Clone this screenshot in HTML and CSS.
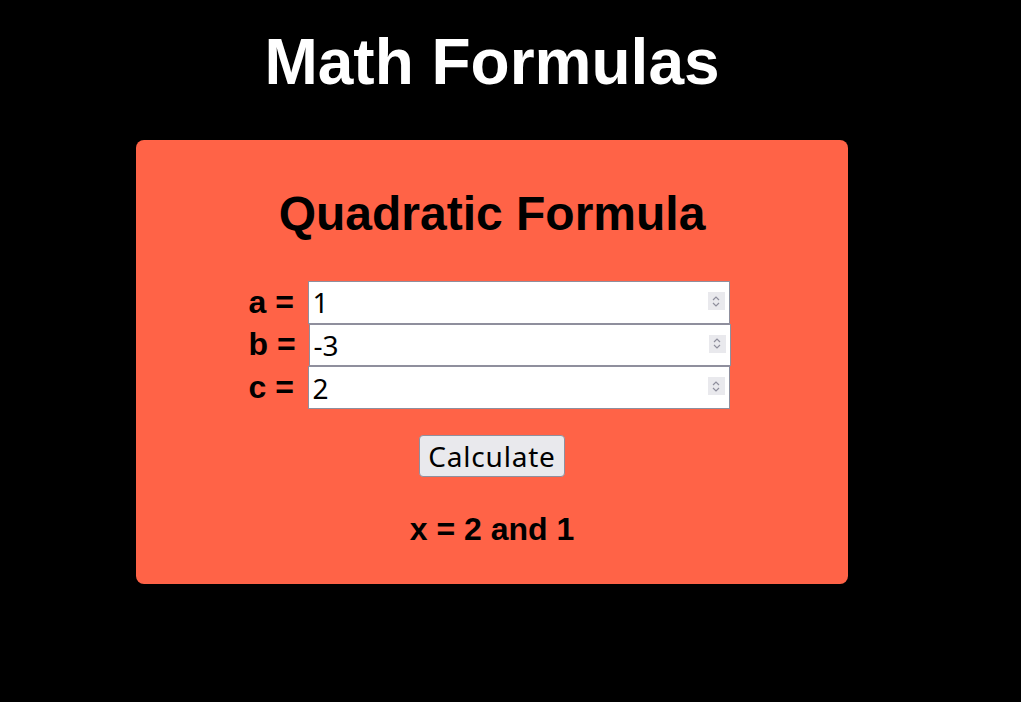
FILE: index.html
```html
<!DOCTYPE html>
<html lang="en">
<head>
<meta charset="utf-8">
<title>Math Formulas</title>
<link rel="stylesheet" href="styles.css">
</head>
<body>
<div class="page">
  <h1 class="title">Math Formulas</h1>
  <section class="card">
    <h2 class="card-title">Quadratic Formula</h2>
    <div class="fields">
      <div class="row">
        <label class="label" for="a">a =</label>
        <span class="field">
          <input class="num" id="a" type="text" value="1">
          <span class="spin"><svg width="8" height="11" viewBox="0 0 8 11"><path d="M1 4 L4 1 L7 4 M1 7 L4 10 L7 7" fill="none" stroke="#8f8f9d" stroke-width="1.2"/></svg></span>
        </span>
      </div>
      <div class="row">
        <label class="label" for="b">b =</label>
        <span class="field field-shift">
          <input class="num" id="b" type="text" value="-3">
          <span class="spin"><svg width="8" height="11" viewBox="0 0 8 11"><path d="M1 4 L4 1 L7 4 M1 7 L4 10 L7 7" fill="none" stroke="#8f8f9d" stroke-width="1.2"/></svg></span>
        </span>
      </div>
      <div class="row">
        <label class="label" for="c">c =</label>
        <span class="field">
          <input class="num" id="c" type="text" value="2">
          <span class="spin"><svg width="8" height="11" viewBox="0 0 8 11"><path d="M1 4 L4 1 L7 4 M1 7 L4 10 L7 7" fill="none" stroke="#8f8f9d" stroke-width="1.2"/></svg></span>
        </span>
      </div>
    </div>
    <button class="calc" type="button">Calculate</button>
    <p class="result">x = 2 and 1</p>
  </section>
</div>
</body>
</html>
```

FILE: styles.css
```css
html, body {
  margin: 0;
  padding: 0;
  background: #000;
}

body {
  font-family: "Liberation Sans", Arial, sans-serif;
  color: #000;
}

.page {
  width: 984px;
  display: flex;
  flex-direction: column;
  align-items: center;
}

.title {
  margin: 25px 0 41px;
  font-size: 64px;
  line-height: 74px;
  font-weight: bold;
  color: #fff;
}

.card {
  width: 712px;
  box-sizing: border-box;
  background: #ff6347;
  border-radius: 8px;
  padding: 46px 0 36px;
  display: flex;
  flex-direction: column;
  align-items: center;
}

.card-title {
  margin: 0 0 40px;
  font-size: 48px;
  line-height: 55px;
  font-weight: bold;
}

.fields {
  display: flex;
  flex-direction: column;
  align-items: center;
  margin-right: 6px;
}

.row {
  display: flex;
  align-items: center;
  gap: 14px;
}

.label {
  font-size: 32px;
  font-weight: bold;
  width: 45px;
  white-space: nowrap;
}

.field {
  position: relative;
  display: block;
}

.field-shift {
  margin-left: 1px;
  margin-right: -1px;
}

.num {
  display: block;
  box-sizing: border-box;
  width: 422px;
  height: 42.6667px;
  margin: 0;
  padding: 1px 4px;
  border: 1px solid #8f8f9d;
  background: #fff;
  font-family: "Noto Sans", "Open Sans", sans-serif;
  font-size: 28px;
  color: #000;
  outline: none;
}

.spin {
  position: absolute;
  right: 5px;
  top: 11px;
  width: 17px;
  height: 18px;
  background: #e9e9ed;
  display: flex;
  align-items: center;
  justify-content: center;
}

.calc {
  margin-top: 26px;
  height: 42px;
  padding: 0 8px;
  border: 1px solid #8f8f9d;
  border-radius: 4px;
  background: #e9e9ed;
  font-family: "Noto Sans", "Open Sans", sans-serif;
  font-size: 28px;
  letter-spacing: 0.8px;
  color: #000;
}

.result {
  margin: 34px 0 0;
  font-size: 32px;
  line-height: 37px;
  font-weight: bold;
}
```
